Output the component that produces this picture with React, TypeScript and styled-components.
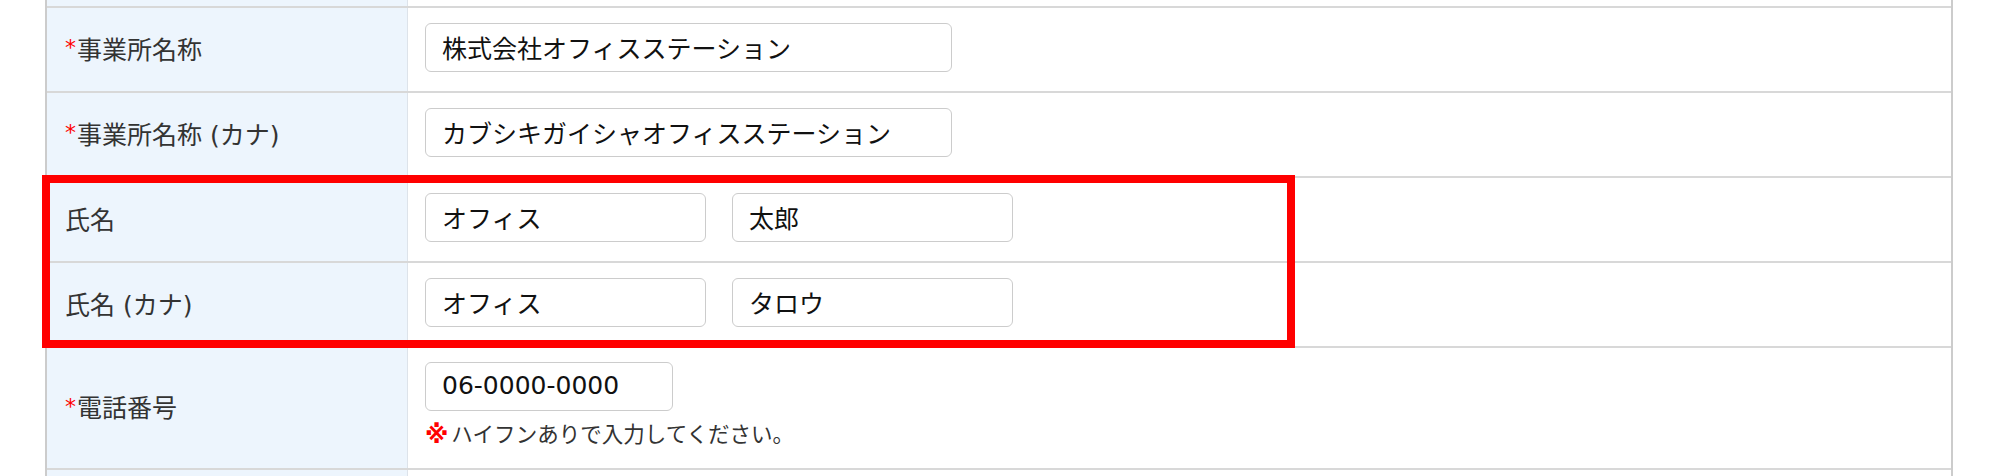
import React from 'react';
import styled, { createGlobalStyle } from 'styled-components';

const GlobalStyle = createGlobalStyle`
	html, body {
		margin: 0;
		padding: 0;
		background: #ffffff;
	}
	body {
		font-family: 'DejaVu Sans', 'Noto Sans CJK JP', sans-serif;
		color: #333333;
		overflow: hidden;
	}
`;

const Page = styled.main`
	width: 2000px;
	height: 476px;
	padding-left: 45px;
	box-sizing: border-box;
`;

const Table = styled.div`
	width: 1908px;
	border-left: 2px solid #cccccc;
	border-right: 2px solid #cccccc;
	box-sizing: border-box;
`;

const Row = styled.div<{ $height: number; $first?: boolean }>`
	display: grid;
	grid-template-columns: 361px 1fr;
	min-height: ${(p) => p.$height}px;
	border-top: ${(p) => (p.$first ? 'none' : '2px solid #d8d8d8')};
`;

const Label = styled.div`
	display: flex;
	align-items: center;
	padding: 0 0 4px 18px;
	background: #edf5fd;
	border-right: 1px solid #dde3ea;
	font-size: 25px;
	color: #333333;
	white-space: nowrap;
`;

const Required = styled.span`
	color: #ff0000;
	font-size: 22px;
	margin-right: 1px;
`;

const Value = styled.div<{ $top: number }>`
	display: flex;
	flex-direction: column;
	justify-content: flex-start;
	padding: ${(p) => p.$top}px 0 0 17px;
`;

const Fields = styled.div`
	display: flex;
	gap: 26px;
`;

const Field = styled.input<{ $width: number }>`
	width: ${(p) => p.$width}px;
	height: 49px;
	box-sizing: border-box;
	padding: 0 0 2px 16px;
	border: 1px solid #cccccc;
	border-radius: 6px;
	background: #ffffff;
	font-family: 'DejaVu Sans', 'Noto Sans CJK JP', sans-serif;
	font-size: 25px;
	color: #111111;
	outline: none;
`;

const Note = styled.p`
	display: flex;
	align-items: center;
	margin: 9px 0 0;
	font-size: 21.5px;
	line-height: 30px;
	color: #333333;
`;

const Mark = styled.span`
	color: #ff0000;
	font-size: 24px;
	font-weight: bold;
	margin-right: 3px;
`;

const Highlight = styled.div`
	position: relative;
`;

const Frame = styled.div`
	position: absolute;
	top: -1px;
	left: -5px;
	width: 1253px;
	bottom: -2px;
	border: 8px solid #ff0000;
	box-sizing: border-box;
	pointer-events: none;
`;

interface FormRow {
	label: string;
	required?: boolean;
	fields: { value: string; width: number }[];
}

const upperRows: FormRow[] = [
	{ label: '事業所名称', required: true, fields: [{ value: '株式会社オフィスステーション', width: 527 }] },
	{ label: '事業所名称 (カナ)', required: true, fields: [{ value: 'カブシキガイシャオフィスステーション', width: 527 }] }
];

const nameRows: FormRow[] = [
	{
		label: '氏名',
		fields: [
			{ value: 'オフィス', width: 281 },
			{ value: '太郎', width: 281 }
		]
	},
	{
		label: '氏名 (カナ)',
		fields: [
			{ value: 'オフィス', width: 281 },
			{ value: 'タロウ', width: 281 }
		]
	}
];

const renderRow = (row: FormRow) => (
	<Row key={row.label} $height={83}>
		<Label>
			{row.required && <Required>*</Required>}
			{row.label}
		</Label>
		<Value $top={15}>
			<Fields>
				{row.fields.map((f, i) => (
					<Field key={i} $width={f.width} value={f.value} readOnly />
				))}
			</Fields>
		</Value>
	</Row>
);

export default function App() {
	return (
		<Page>
			<GlobalStyle />
			<Table>
				<Row $height={6} $first>
					<Label />
					<Value $top={0} />
				</Row>
				{upperRows.map(renderRow)}
				<Highlight>
					{nameRows.map(renderRow)}
					<Frame />
				</Highlight>
				<Row $height={120}>
					<Label>
						<Required>*</Required>
						電話番号
					</Label>
					<Value $top={14}>
						<Field $width={248} value="06-0000-0000" readOnly />
						<Note>
							<Mark>※</Mark>ハイフンありで入力してください。
						</Note>
					</Value>
				</Row>
				<Row $height={20}>
					<Label />
					<Value $top={0} />
				</Row>
			</Table>
		</Page>
	);
}
